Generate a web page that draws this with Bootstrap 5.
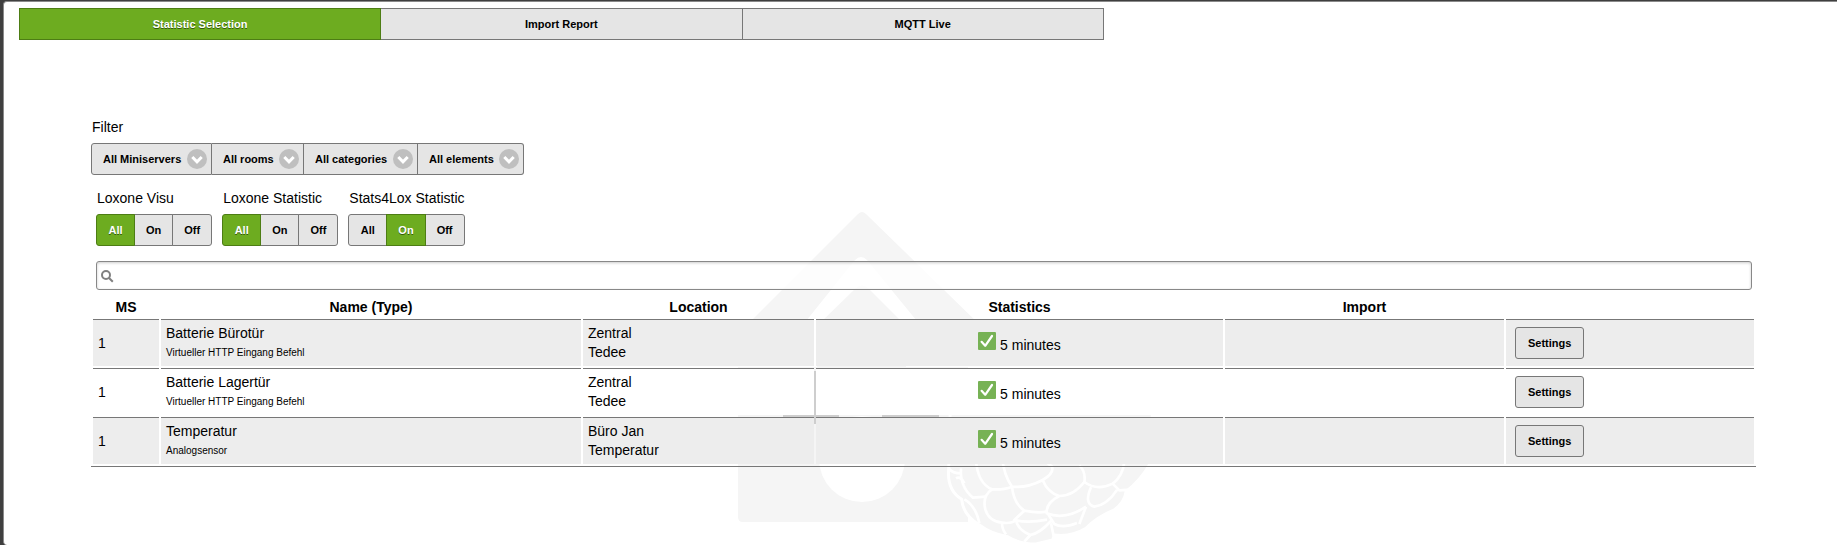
<!DOCTYPE html>
<html lang="en">
<head>
<meta charset="utf-8">
<meta name="viewport" content="width=device-width, initial-scale=1">
<title>Statistic Selection</title>
<link href="https://cdn.jsdelivr.net/npm/bootstrap@5.3.0/dist/css/bootstrap.min.css" rel="stylesheet">
<style>
  body { background: #3f3f3f; font-family: "Liberation Sans", Arial, sans-serif; font-size: 14px; line-height: 19px; color: #000; }
  .panel { min-height: calc(100vh - 1px); margin: 1px 0 0 3px; background: #fff; border: 1px solid #8a8a8a; border-width: 1px 0 0 1px; border-radius: 4px 0 0 4px; }
  .watermark { z-index: 0; pointer-events: none; padding-top: 198px; }
  .watermark svg { width: 480px; height: 345px; flex: none; }
  .layer { z-index: 1; }
  .top-tabs { padding: 6px 10px 0 15px; }
  .top-tabs .btn-group { width: 60%; }
  .main-area { padding: 78px 81px 24px 87px; }

  .btn-ui { --bs-btn-bg: #e5e5e5; --bs-btn-color: #000; --bs-btn-border-color: #777; --bs-btn-border-radius: 3px;
    --bs-btn-hover-bg: #dadada; --bs-btn-hover-color: #000; --bs-btn-hover-border-color: #777;
    --bs-btn-active-bg: #6dac20; --bs-btn-active-color: #fff; --bs-btn-active-border-color: #4d7d14;
    --bs-btn-padding-x: 12px; --bs-btn-padding-y: 6px; --bs-btn-font-size: 11px; --bs-btn-font-weight: 700; --bs-btn-line-height: 18px;
    --bs-btn-active-shadow: none; height: 32px; }
  .btn-ui.active, .btn-check:checked + .btn-ui { text-shadow: 0 1px 0 #335a0c; }
  .top-tabs .btn-ui { --bs-btn-border-radius: 0; flex: 1 1 0; }

  .field-label { padding-left: 1px; margin-bottom: 6px; }
  .toggle-row { gap: 10px; padding: 0 5px; margin: 14px 0 15px; }
  .toggle-set .btn-ui { min-width: 39px; --bs-btn-padding-x: 11px; }
  .search-row { padding: 0 4px 0 5px; }

  .pick { height: 32px; border: 1px solid #777; border-left-width: 0; padding: 0 29px 0 11px; font-size: 11px; font-weight: 700; color: #000; appearance: none;
    background: #e5e5e5 url("data:image/svg+xml,%3Csvg xmlns='http://www.w3.org/2000/svg' width='20' height='20' viewBox='0 0 20 20'%3E%3Ccircle cx='10' cy='10' r='10' fill='%23bfbfbf'/%3E%3Cpath d='M5.3 8l4.7 4.8L14.7 8' fill='none' stroke='%23fff' stroke-width='3'/%3E%3C/svg%3E") no-repeat right 4px center; }
  .pick:first-child { border-left-width: 1px; border-radius: 3px 0 0 3px; }
  .pick:last-child { border-radius: 0 3px 3px 0; }

  .search-box { height: 29px; border: 1px solid #888; border-radius: 3px; padding: 0 8px 0 24px; box-shadow: inset 0 1px 3px rgba(0,0,0,.2);
    background: rgba(255,255,255,.8) url("data:image/svg+xml,%3Csvg xmlns='http://www.w3.org/2000/svg' width='14' height='14' viewBox='0 0 14 14'%3E%3Cg fill='none' stroke='%23808080' stroke-width='2'%3E%3Ccircle cx='6' cy='6' r='4'/%3E%3Cpath d='M8.8 8.8l4 4'/%3E%3C/g%3E%3C/svg%3E") no-repeat 3px center; }

  .stat-table { table-layout: fixed; border-collapse: separate; border-spacing: 2px; border-bottom: 1px solid #777; margin-top: 4px; }
  .stat-table th { height: 21px; padding: 0 4px; text-align: center; vertical-align: bottom; font-weight: 700; }
  .stat-table td { padding: 4px 5px; border-top: 1px solid #777; background: #fff; vertical-align: middle; }
  .stat-table tbody tr:nth-child(odd) td { background: #ededed; }
  .stat-table .kind { font-size: 10px; }
  .stat-table td.act { padding: 0 9px; }
  .stat-table svg { vertical-align: baseline; }
</style>
</head>
<body>
<div class="panel position-relative overflow-hidden">

  <!-- house and berry watermark behind the content -->
  <div class="watermark position-absolute top-0 start-0 end-0 d-flex justify-content-center" aria-hidden="true">
    <svg viewBox="680 200 480 345">
      <g fill="#f5f5f5">
        <path d="M857 214q4-4 8 0L980 326h-60L866 260q-6-6-12 0L801 326h-56z"/>
        <path d="M816 326L855 288q6-5 12 0L905 326v41h-89z"/>
        <path d="M737 367h230v155H742q-5 0-5-5z"/>
      </g>
      <circle cx="861" cy="459" r="43" fill="#fff"/>
      <path d="M782 371h56v53h-56zM881 371h57v53h-57z" fill="#cecece"/>
      <g transform="translate(920 400) scale(.33333)">
        <path d="M90 -60L83 210Q78 270 122 298Q126 345 175 375Q210 402 260 410Q295 432 345 432L395 420L400 405Q450 412 495 385Q530 350 580 330Q612 305 615 275Q660 240 685 195L700 -60z" fill="#f5f5f5" stroke="#fff" stroke-width="9"/>
        <g fill="none" stroke="#fff" stroke-width="8" stroke-linejoin="round">
          <path d="M83 205q12 15 38 15M120 205q-4 55 36 88l38-3M105 235q15-8 25 15"/>
          <path d="M165 180q5 70 48 88q35 2 60-8M213 268q-30 20-20 60q10 35 50 40q28 4 42-8"/>
          <path d="M243 170q5 55 30 90q45 5 92-20q35-20 28-40l-15-12"/>
          <path d="M365 240q15 38 50 48q42 0 75-42q5-30-15-50M415 288q-40 20-38 52q55 22 118-20"/>
          <path d="M273 260q5 50 37 72q40 8 67 3M310 332l-30 28q40 10 98-1M285 360q5 30 43 45q28-5 62-42M380 340l20 32q25 14 68-3"/>
          <path d="M490 246q38 28 85 5q30-22 35-65M510 262q-22 50 10 58q38-5 68-50M575 251l20 20l32-2M495 320l-20 52"/>
          <path d="M130 298q35 20 45 72M243 368q0 20 12 35M328 405l-18 20M390 370l8 38"/>
        </g>
      </g>
    </svg>
  </div>

  <nav class="top-tabs layer position-relative">
    <div class="btn-group d-flex">
      <button type="button" class="btn btn-ui active">Statistic Selection</button>
      <button type="button" class="btn btn-ui">Import Report</button>
      <button type="button" class="btn btn-ui">MQTT Live</button>
    </div>
  </nav>

  <main class="main-area layer position-relative">
    <div class="field-label" id="filter-label">Filter</div>
    <div class="d-flex" role="group" aria-labelledby="filter-label">
      <select class="pick" aria-label="Miniserver"><option>All Miniservers</option></select>
      <select class="pick" aria-label="Room"><option>All rooms</option></select>
      <select class="pick" aria-label="Category"><option>All categories</option></select>
      <select class="pick" aria-label="Element"><option>All elements</option></select>
    </div>

    <div class="d-flex toggle-row">
      <div class="toggle-set">
        <div class="field-label" id="visu-label">Loxone Visu</div>
        <div class="btn-group d-flex" role="group" aria-labelledby="visu-label">
          <input type="radio" class="btn-check" name="visu" id="visu-all" checked><label class="btn btn-ui flex-grow-0" for="visu-all">All</label>
          <input type="radio" class="btn-check" name="visu" id="visu-on"><label class="btn btn-ui flex-grow-0" for="visu-on">On</label>
          <input type="radio" class="btn-check" name="visu" id="visu-off"><label class="btn btn-ui flex-grow-0" for="visu-off">Off</label>
        </div>
      </div>
      <div class="toggle-set">
        <div class="field-label" id="lox-label">Loxone Statistic</div>
        <div class="btn-group d-flex" role="group" aria-labelledby="lox-label">
          <input type="radio" class="btn-check" name="lox" id="lox-all" checked><label class="btn btn-ui flex-grow-0" for="lox-all">All</label>
          <input type="radio" class="btn-check" name="lox" id="lox-on"><label class="btn btn-ui flex-grow-0" for="lox-on">On</label>
          <input type="radio" class="btn-check" name="lox" id="lox-off"><label class="btn btn-ui flex-grow-0" for="lox-off">Off</label>
        </div>
      </div>
      <div class="toggle-set">
        <div class="field-label" id="s4l-label">Stats4Lox Statistic</div>
        <div class="btn-group d-flex" role="group" aria-labelledby="s4l-label">
          <input type="radio" class="btn-check" name="s4l" id="s4l-all"><label class="btn btn-ui flex-grow-0" for="s4l-all">All</label>
          <input type="radio" class="btn-check" name="s4l" id="s4l-on" checked><label class="btn btn-ui flex-grow-0" for="s4l-on">On</label>
          <input type="radio" class="btn-check" name="s4l" id="s4l-off"><label class="btn btn-ui flex-grow-0" for="s4l-off">Off</label>
        </div>
      </div>
    </div>

    <div class="d-flex search-row">
      <input type="text" class="search-box w-100" aria-label="Search">
    </div>

    <table class="stat-table w-100">
      <colgroup><col style="width:66px"><col style="width:420px"><col style="width:231px"><col style="width:407px"><col style="width:279px"><col style="width:248px"></colgroup>
      <thead>
        <tr><th>MS</th><th>Name (Type)</th><th>Location</th><th>Statistics</th><th>Import</th><th></th></tr>
      </thead>
      <tbody>
        <tr>
          <td>1</td>
          <td>Batterie Bürotür<span class="kind d-block">Virtueller HTTP Eingang Befehl</span></td>
          <td>Zentral<br>Tedee</td>
          <td class="text-center"><svg width="18" height="18" viewBox="0 0 18 18"><rect width="18" height="18" rx="1" fill="#77b255"/><path d="M3.6 9.8l3.6 4L14 4" fill="none" stroke="#fff" stroke-width="2.2" stroke-linecap="round" stroke-linejoin="round"/></svg> 5 minutes</td>
          <td></td>
          <td class="act"><button type="button" class="btn btn-ui">Settings</button></td>
        </tr>
        <tr>
          <td>1</td>
          <td>Batterie Lagertür<span class="kind d-block">Virtueller HTTP Eingang Befehl</span></td>
          <td>Zentral<br>Tedee</td>
          <td class="text-center"><svg width="18" height="18" viewBox="0 0 18 18"><rect width="18" height="18" rx="1" fill="#77b255"/><path d="M3.6 9.8l3.6 4L14 4" fill="none" stroke="#fff" stroke-width="2.2" stroke-linecap="round" stroke-linejoin="round"/></svg> 5 minutes</td>
          <td></td>
          <td class="act"><button type="button" class="btn btn-ui">Settings</button></td>
        </tr>
        <tr>
          <td>1</td>
          <td>Temperatur<span class="kind d-block">Analogsensor</span></td>
          <td>Büro Jan<br>Temperatur</td>
          <td class="text-center"><svg width="18" height="18" viewBox="0 0 18 18"><rect width="18" height="18" rx="1" fill="#77b255"/><path d="M3.6 9.8l3.6 4L14 4" fill="none" stroke="#fff" stroke-width="2.2" stroke-linecap="round" stroke-linejoin="round"/></svg> 5 minutes</td>
          <td></td>
          <td class="act"><button type="button" class="btn btn-ui">Settings</button></td>
        </tr>
      </tbody>
    </table>
  </main>
</div>
<script src="https://cdn.jsdelivr.net/npm/bootstrap@5.3.0/dist/js/bootstrap.bundle.min.js"></script>
</body>
</html>
